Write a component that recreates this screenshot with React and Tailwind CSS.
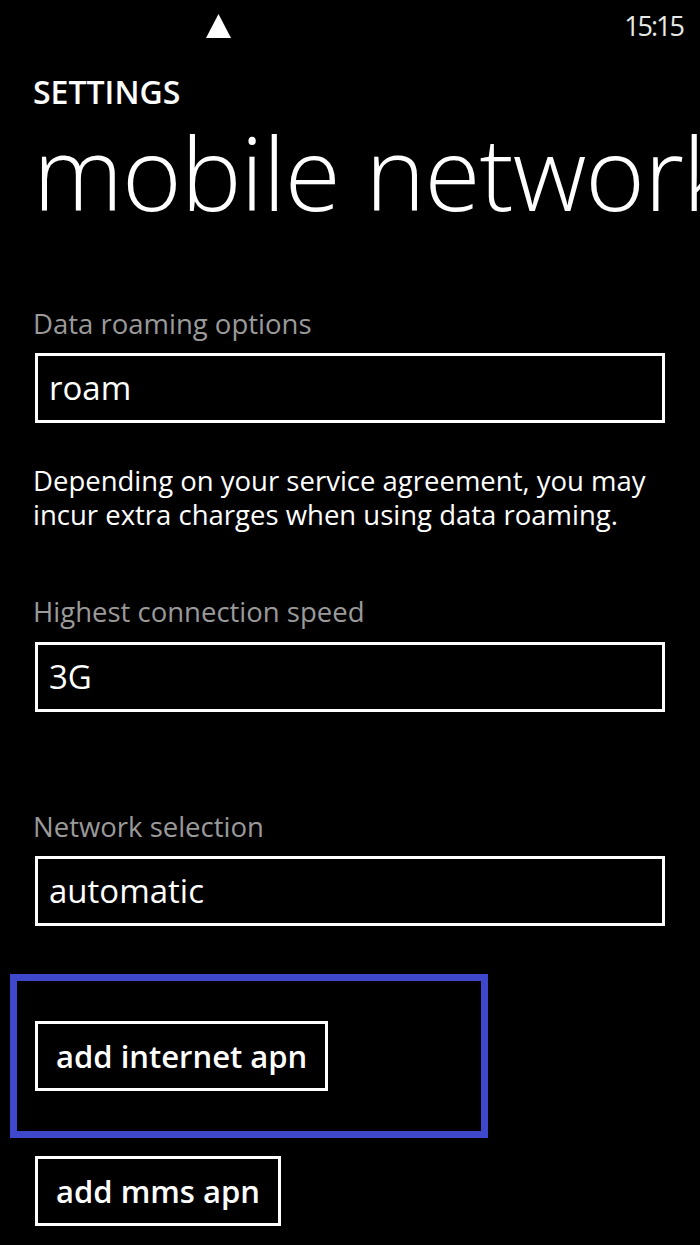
import React from "react";

const FONT = { fontFamily: '"Open Sans", "Noto Sans", sans-serif' };

function Label({ children, className = "" }) {
  return <div className={`text-[27.5px] leading-[34px] text-[#9a9a9a] ${className}`}>{children}</div>;
}

function PickerBox({ value, className = "" }) {
  // picker field, white 3px outline
  return (
    <div className={`flex items-center h-[70px] w-[630px] border-[3px] border-white pl-[11px] ${className}`}>
      <span className="text-[33px] leading-[40px] text-white">{value}</span>
    </div>
  );
}

function OutlineButton({ children }) {
  return (
    <div className="flex items-center h-[70px] border-[3px] border-white px-[18px]">
      <span className="text-[31px] leading-[40px] font-semibold text-white whitespace-nowrap">{children}</span>
    </div>
  );
}

export default function App() {
  return (
    <div className="w-[700px] h-[1245px] bg-black text-white overflow-hidden" style={FONT}>
      {/* status bar */}
      <div className="flex items-start justify-between h-[50px] pl-[206px] pr-[17px] pt-[12px]">
        <svg width="25" height="24" viewBox="0 0 25 24" className="mt-[2px]">
          <path d="M12.5 0 L25 24 L0 24 Z" fill="#fff" />
        </svg>
        <span className="text-[27px] leading-[28px] tracking-[-2px] text-[#e8e8e8]">15:15</span>
      </div>

      <div className="pl-[33px]">
        <div className="mt-[24px] text-[32px] leading-[36px] font-semibold">SETTINGS</div>
        <div className="mt-[7px] text-[102px] leading-[110px] font-light whitespace-nowrap tracking-[-1px]">
          mobile network
        </div>

        <Label className="mt-[80px]">Data roaming options</Label>
        <PickerBox value="roam" className="mt-[12px] ml-[2px]" />

        <p className="mt-[41px] w-[650px] text-[27.5px] leading-[34px]">
          Depending on your service agreement, you may incur extra charges when using data roaming.
        </p>

        <Label className="mt-[63px]">Highest connection speed</Label>
        <PickerBox value="3G" className="mt-[13px] ml-[2px]" />

        <Label className="mt-[98px]">Network selection</Label>
        <PickerBox value="automatic" className="mt-[12px] ml-[2px]" />
      </div>

      {/* focused button highlight */}
      <div className="ml-[10px] mt-[48px] w-[478px] border-[7px] border-[#3f48cc] pl-[18px] py-[40px]">
        <div className="flex">
          <OutlineButton>add internet apn</OutlineButton>
        </div>
      </div>
      <div className="flex ml-[35px] mt-[18px]">
        <OutlineButton>add mms apn</OutlineButton>
      </div>
    </div>
  );
}
